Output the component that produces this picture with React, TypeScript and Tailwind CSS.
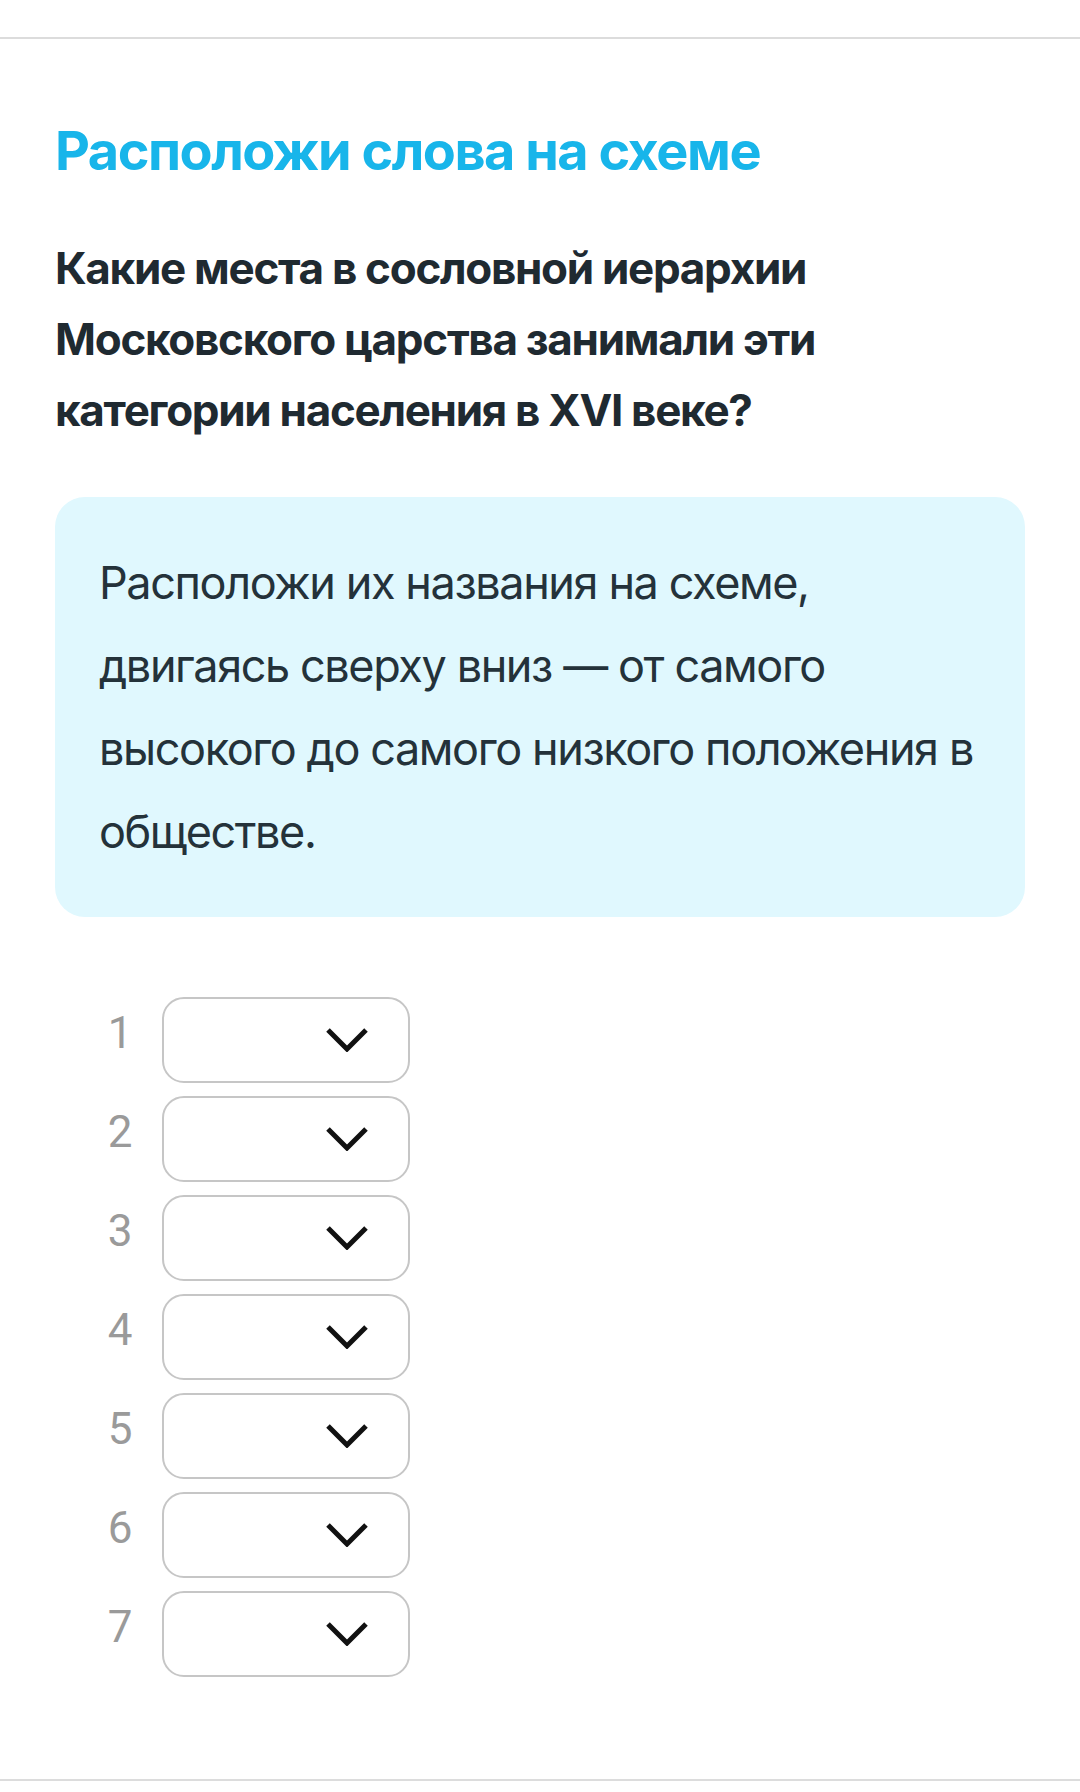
import React from 'react'

const slots = [1, 2, 3, 4, 5, 6, 7]

function Chevron() {
    return (
        <svg width="42" height="24" viewBox="0 0 42 24" fill="none">
            <path d="M2 2l19 19L40 2" stroke="#111" strokeWidth={5} strokeLinecap="butt" strokeLinejoin="miter" />
        </svg>
    )
}

export default function App() {
    return (
        <div className="min-h-[1792px] bg-white font-['Inter','Noto_Sans',sans-serif]">
            <div className="pt-[37px]">
                <div className="border-t-2 border-[#dcdcdc]" />
            </div>

            <div className="px-[55px]">
                {/* Title */}
                <h1 className="mt-[80px] text-[54px] leading-[64px] font-bold text-[#18b5ea] tracking-[-1.5px]">
                    Расположи слова на схеме
                </h1>

                {/* Question */}
                <p className="mt-[50px] text-[44px] leading-[71px] font-bold text-[#1f2a31] tracking-[-1.3px]">
                    Какие места в сословной иерархии<br />
                    Московского царства занимали эти<br />
                    категории населения в XVI веке?
                </p>

                {/* Hint box */}
                <div className="mt-[51px] rounded-[30px] bg-[#e0f8fe] pl-[44px] pr-[30px] pt-[44px] pb-[44px]">
                    <p className="text-[45px] leading-[83px] text-[#24323a] tracking-[-1.4px] whitespace-nowrap">
                        Расположи их названия на схеме,<br />
                        двигаясь сверху вниз — от самого<br />
                        высокого до самого низкого положения в<br />
                        обществе.
                    </p>
                </div>
            </div>

            {/* Slots */}
            <div className="mt-[80px] flex flex-col gap-[13px] pl-[100px]">
                {slots.map(n => (
                    <div key={n} className="flex items-center">
                        <span className="w-[40px] text-center text-[44px] leading-none text-[#9a9a9a] font-['Roboto',sans-serif] -mt-[14px]">
                            {n}
                        </span>
                        <div className="ml-[22px] flex h-[86px] w-[248px] items-center justify-end rounded-[22px] border-2 border-[#c6c6c6] pr-[40px]">
                            <Chevron />
                        </div>
                    </div>
                ))}
            </div>

            <div className="mt-[102px] border-t-2 border-[#dcdcdc]" />
        </div>
    )
}
